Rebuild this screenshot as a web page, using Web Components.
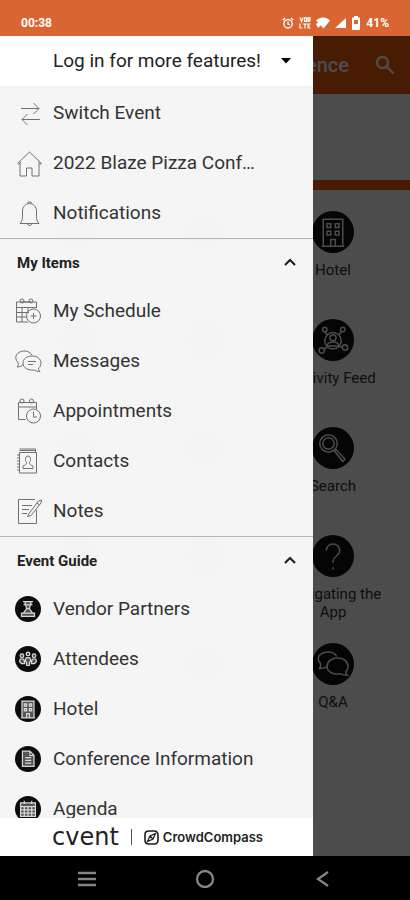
<!DOCTYPE html>
<html lang="en">
<head>
<meta charset="utf-8">
<meta name="viewport" content="width=device-width, initial-scale=1">
<title>Event menu</title>
<style>
  body {
    margin: 0;
    font-family: Roboto, "Liberation Sans", sans-serif;
    color: #333333;
  }
</style>
</head>
<body>
<event-app></event-app>

<script>
// thin line icons, 28x28 grid
const icons = {
  swap: '<path d="M6 9.500h18M18.500 4l5.500 5.500-5.500 5.500M25 20.500H7M12.500 15L7 20.500l5.500 5.500"/>',
  home: '<path d="M2.500 14.500L14.500 3l12 11.500M5 12.500V27h6.500v-8H17v8h7V12.500M4.500 15H3M24.500 15h2"/>',
  bell: '<path d="M5 24.500h19c-2-2-2.500-4-2.500-7V12c0-4-3-7.500-7-7.500S7.500 8 7.500 12v5.500c0 3-.5 5-2.500 7zM13 4.500V3h3v1.500M12.500 25c0 2 4 2 4 0"/>',
  schedule: '<path d="M13 25H1.500V5h20v6M1.500 10.500h20M7 10.500V25M13 10.500V16M1.500 15.500H14M1.500 20H12M7 5h9"/><circle cx="7" cy="4" r="2"/><circle cx="16" cy="4" r="2"/><circle cx="18.500" cy="19" r="7"/><path d="M18.500 16v6M15.500 19h6"/>',
  chat: '<path d="M8 17.500c-1 1.500-3 2.500-6 2.500 1.500-1.500 1.500-3 1-4.500C-2 10 2 4.500 8.500 4c4-.3 7 1.500 8.500 4"/><path d="M17 9c5.500 0 9 3 9 7 0 2.500-1 4-2.500 5 0 1.500.5 2.500 1.500 3.500-2.500 0-4.500-.5-6-1.500C13 23.500 8 21 8 16c0-4 3.500-7 9-7z"/><path class="detail" d="M13 14.500h8M13 17.500h5"/>',
  appointment: '<path d="M10.500 22.500H3.500V5.500h18V12M3.500 10h18M7 5.500h9"/><circle cx="7" cy="4" r="2"/><circle cx="16.500" cy="4" r="2"/><circle cx="18.500" cy="19" r="7"/><path d="M18.500 14.500V20h3.500"/>',
  contacts: '<path d="M4.500 5.500h17V26h-17zM4.500 3.500h16M4.500 2h16v3M2 8h3M2 11h3M2 14h3M2 17h3M2 20h3M2 23h3"/><path d="M13 9c-2 0-2.500 1.500-2.500 3.500 0 1.500.5 2 1 3 0 2-1 2.500-3.500 3.500v2.500h10V19c-2.500-1-3.500-1.500-3.500-3.500.5-1 1-1.500 1-3C15.500 10.500 15 9 13 9z"/>',
  notes: '<path d="M21.500 13v13.500h-18v-24h16.500M7 8.500h10M7 12.500h7M7 16.500h5"/><path d="M14 16.500L23.500 4l3-1-.5 3L16 18.500l-3.500 1zM22 6l2.500 2"/>',
  vendor: '<path d="M8.500 6h11M11 6v3.500h6V6M11.500 9.500l1 4h3l1-4M12.500 13.500L9 18.500h10l-3.500-5M7 18.500h14V22H7z"/><path d="M10 8v2M18 8v2"/>',
  attendees: '<circle cx="14" cy="8.500" r="2"/><circle cx="7.500" cy="10.500" r="2"/><circle cx="20.500" cy="10.500" r="2"/><path d="M12 12.500h4l1 4-1.500 1V21h-3v-3.500L11 16.500zM5.500 14h4l1 5H7l-2-2zM18.500 14h4l.5 3-2 2h-3.500z"/>',
  hotel: '<path d="M7.500 5.500h13v18h-13zM6.500 23.500h15M12.500 23.500V19h3v4.500"/><path d="M10 8.500h2.500V11H10zM15.500 8.500H18V11h-2.500zM10 13.500h2.500V16H10zM15.500 13.500H18V16h-2.500z"/>',
  document: '<path d="M8 5.500h8l4.500 4.500V22H8zM16 5.500V10h4.500M11 12.500h6.500M11 15.500h6.500M11 18.500h6.500"/>',
  agenda: '<path d="M6 7.500h16V22H6zM6 11.500h16M6 15h16M6 18.500h16M10 11.500V22M14 11.500V22M18 11.500V22M10 5v3.500M18 5v3.500"/>',
  feed: '<circle cx="14" cy="14.500" r="5.500"/><circle cx="14" cy="12.500" r="2"/><path d="M10 18c.5-3.500 7.500-3.500 8 0zM10 10.500L8.500 8.500M18 10.500l1.500-2M10 18.500l-2 2M18 18l2.500 1"/><circle cx="8.500" cy="7" r="1.500"/><circle cx="20.500" cy="7" r="1.500"/><circle cx="6.500" cy="21" r="1.800"/><circle cx="22" cy="19" r="1.800"/>',
  magnifier: '<circle cx="11" cy="11" r="5.800"/><circle cx="11" cy="11" r="3.800"/><path d="M15 16l1-1 6 6.500-1.500 1.500z"/>',
  question: '<path d="M9.500 10.500C9.500 4.500 18.500 4.500 18.500 10.500c0 3.500-4.500 3.500-4.500 7v1"/><path d="M14 21.500v1.500"/>',
  talk: '<path d="M10 15.500c-1 1-2.500 1.500-5 1.500 1-1.500 1-2.500.5-3.500C2.500 10 5 6.500 10 6c3-.2 5.500 1 6.500 3"/><path d="M17 10c4 0 7 2.300 7 5.500 0 1.800-.5 3-1.500 3.800 0 1 .5 1.700 1 2.200-2 0-3.500-.3-4.500-1-5 1-9-1.500-9-5C10 12.300 13 10 17 10z"/>'
};

const statusTemplate = document.createElement('template');
statusTemplate.innerHTML = `
  <style>
    :host {
      display: flex;
      flex: none;
      align-items: center;
      justify-content: space-between;
      box-sizing: border-box;
      height: 36px;
      padding: 10px 21px 0 21px;
      background-color: #d86532;
      color: #ffffff;
      font-size: 12px;
      font-weight: 700;
      line-height: 16px;
    }
    .indicators {
      display: flex;
      align-items: center;
      gap: 5px;
    }
    svg {
      display: block;
    }
  </style>
  <span>00:38</span>
  <div class="indicators">
    <svg width="12" height="12" viewBox="0 0 12 12" fill="none" stroke="#fff" stroke-width="1.300"><circle cx="6" cy="6.800" r="4.200"/><path d="M6 4.500V7l1.800 1M.8 3L3 1M11.200 3L9 1"/></svg>
    <svg width="12" height="12" viewBox="0 0 12 12" fill="none" stroke="#fff" stroke-width="1.200"><path d="M1 .5l1.500 4 1.500-4M5.500.8h2v3.500h-2zM9 5V.8h2v2H9l2 2M1 6.500V11h2.500M4 7h4M6 7v4.500M11.500 7H9v4h2.500M9 9h2"/></svg>
    <svg width="14" height="12" viewBox="0 0 14 12" fill="#fff"><path d="M0 3.500c4-4 10-4 14 0L7.500 11.500z"/><path d="M0 7l3-2 2 3-3 3z"/></svg>
    <svg width="11" height="12" viewBox="0 0 11 12" fill="#fff"><path d="M11 1v10H0z"/></svg>
    <svg width="10" height="14" viewBox="0 0 10 14" fill="#fff" fill-rule="evenodd"><path d="M3 0h4v1.500h2V14H1V1.500h2zM3 4v4h4V4z"/></svg>
    <span>41%</span>
  </div>
`;

const navTemplate = document.createElement('template');
navTemplate.innerHTML = `
  <style>
    :host {
      display: flex;
      flex: none;
      height: 44px;
      padding: 0 28px;
      background-color: #000000;
    }
    button {
      display: flex;
      flex: 1;
      align-items: center;
      justify-content: center;
      padding: 0;
      border: 0;
      background: none;
    }
    svg {
      fill: none;
      stroke: #858585;
      stroke-width: 2.3;
    }
  </style>
  <button aria-label="Recent apps"><svg width="20" height="20" viewBox="0 0 20 20"><path d="M1 5h18M1 11h18M1 17h18"/></svg></button>
  <button aria-label="Home"><svg width="20" height="20" viewBox="0 0 20 20"><circle cx="10" cy="11" r="8"/></svg></button>
  <button aria-label="Back"><svg width="20" height="20" viewBox="0 0 20 20"><path d="M15 4L5 11l10 7"/></svg></button>
`;

const tileTemplate = document.createElement('template');
tileTemplate.innerHTML = `
  <style>
    :host {
      display: block;
      padding: 0 10px;
    }
    a {
      display: flex;
      flex-direction: column;
      align-items: center;
      gap: 8px;
      color: #333333;
      font-size: 15px;
      line-height: 18px;
      text-align: center;
      text-decoration: none;
    }
    svg {
      width: 42px;
      height: 42px;
      border-radius: 50%;
      background-color: #111111;
      fill: none;
      stroke: #ffffff;
      stroke-width: 1;
    }
  </style>
  <a href="#"><svg viewBox="0 0 28 28"></svg><slot></slot></a>
`;

const itemTemplate = document.createElement('template');
itemTemplate.innerHTML = `
  <style>
    :host {
      display: block;
    }
    a {
      display: flex;
      align-items: center;
      gap: 10px;
      height: 50px;
      padding: 0 56px 0 15px;
      color: #333333;
      font-size: 19px;
      line-height: 24px;
      text-decoration: none;
    }
    svg {
      flex: none;
      width: 28px;
      height: 28px;
      fill: none;
      stroke: #707070;
      stroke-width: 1;
    }
    :host([filled]) a {
      gap: 12px;
    }
    :host([filled]) svg {
      width: 26px;
      height: 26px;
      border-radius: 50%;
      background-color: #0c0c0c;
      fill: rgba(255, 255, 255, 0.3);
      stroke: #d8d8d8;
      stroke-width: 1.3;
    }
    span {
      overflow: hidden;
      text-overflow: ellipsis;
      white-space: nowrap;
    }
  </style>
  <a href="#"><svg viewBox="0 0 28 28"></svg><span><slot></slot></span></a>
`;

const sectionTemplate = document.createElement('template');
sectionTemplate.innerHTML = `
  <style>
    :host {
      display: block;
    }
    button {
      display: flex;
      align-items: center;
      justify-content: space-between;
      box-sizing: border-box;
      width: 100%;
      height: 48px;
      padding: 0 16px 0 17px;
      border: 0;
      border-top: 1px solid #b4b4b4;
      background: none;
      color: #222222;
      font: 700 15px/20px Roboto, "Liberation Sans", sans-serif;
    }
    svg {
      fill: none;
      stroke: #1c1c1c;
      stroke-width: 2;
    }
    :host([collapsed]) .items {
      display: none;
    }
    :host([collapsed]) svg {
      transform: rotate(180deg);
    }
  </style>
  <button aria-expanded="true">
    <span class="heading"></span>
    <svg width="14" height="14" viewBox="0 0 14 14"><path d="M2 9l5-5 5 5"/></svg>
  </button>
  <div class="items"><slot></slot></div>
`;

const drawerTemplate = document.createElement('template');
drawerTemplate.innerHTML = `
  <style>
    :host {
      display: flex;
      flex-direction: column;
      box-sizing: border-box;
    }
    .account {
      display: flex;
      flex: none;
      align-items: center;
      justify-content: space-between;
      height: 50px;
      padding: 0 22px 0 53px;
      border: 0;
      background-color: #ffffff;
      color: #222222;
      font: 400 19px/24px Roboto, "Liberation Sans", sans-serif;
    }
    .list {
      flex: 1;
      min-height: 0;
      padding-top: 2px;
      overflow: hidden auto;
      scrollbar-width: none;
      background-color: rgba(249, 249, 249, 0.98);
    }
    footer {
      display: flex;
      flex: none;
      align-items: center;
      height: 38px;
      padding-left: 52px;
      background-color: #ffffff;
      color: #222222;
    }
    .cvent {
      font: 400 24px/24px "DejaVu Sans", sans-serif;
    }
    .rule {
      width: 1px;
      height: 16px;
      margin: 0 12px;
      background-color: #555555;
    }
    .crowd {
      margin-left: 4px;
      font: 600 13px/16px Inter, sans-serif;
    }
  </style>
  <button class="account">
    <span>Log in for more features!</span>
    <svg width="10" height="6" viewBox="0 0 10 6"><path d="M0 0h10L5 5.500z"/></svg>
  </button>
  <div class="list"><slot></slot></div>
  <footer>
    <span class="cvent">cvent</span>
    <span class="rule"></span>
    <svg width="15" height="15" viewBox="0 0 15 15" fill="none" stroke="#1c1c1c" stroke-width="1.600"><path d="M5 1h5c3 0 4 1 4 4v5c0 3-1 4-4 4H5c-3 0-4-1-4-4V5c0-3 1-4 4-4z"/><path stroke-width="1.200" d="M11.500 3.500L9 9l-5.500 2.500L6 6zM6 6l3 3"/></svg>
    <span class="crowd">CrowdCompass</span>
  </footer>
`;

const homeTemplate = document.createElement('template');
homeTemplate.innerHTML = `
  <style>
    :host {
      display: block;
      background-color: #ffffff;
    }
    header {
      display: flex;
      align-items: center;
      justify-content: flex-end;
      gap: 25px;
      box-sizing: border-box;
      height: 58px;
      padding-right: 14px;
      background-color: #f05a0a;
      color: #ffffff;
    }
    h1 {
      margin: 0;
      font-size: 20px;
      font-weight: 500;
      line-height: 26px;
      white-space: nowrap;
    }
    button {
      padding: 0;
      border: 0;
      background: none;
    }
    header svg {
      display: block;
      fill: none;
      stroke: #ffffff;
      stroke-width: 2.4;
    }
    .banner {
      height: 86px;
      border-bottom: 10px solid #f05a0a;
    }
    .tiles {
      display: grid;
      grid-template-columns: repeat(3, 1fr);
      grid-auto-rows: 108px;
      padding: 21px 13px 0;
    }
    home-tile {
      grid-column: 3;
    }
    .spot {
      justify-self: center;
      width: 42px;
      height: 42px;
      border-radius: 50%;
      background-color: #111111;
    }
  </style>
  <header>
    <h1>Conference</h1>
    <button aria-label="Search"><svg width="22" height="22" viewBox="0 0 22 22"><circle cx="8.500" cy="8.500" r="5.500"/><path d="M12.500 12.500l7 7"/></svg></button>
  </header>
  <div class="banner"></div>
  <div class="tiles">
    <div class="spot"></div><div class="spot"></div>
    <home-tile icon="hotel">Hotel</home-tile>
    <div class="spot"></div><div class="spot"></div>
    <home-tile icon="feed">Activity Feed</home-tile>
    <div class="spot"></div><div class="spot"></div>
    <home-tile icon="magnifier">Search</home-tile>
    <div class="spot"></div><div class="spot"></div>
    <home-tile icon="question">Navigating the App</home-tile>
    <div class="spot"></div><div class="spot"></div>
    <home-tile icon="talk">Q&amp;A</home-tile>
  </div>
`;

const appTemplate = document.createElement('template');
appTemplate.innerHTML = `
  <style>
    :host {
      display: flex;
      flex-direction: column;
      height: 100vh;
    }
    main {
      position: relative;
      flex: 1;
      min-height: 0;
      overflow: hidden;
    }
    home-screen {
      height: 100%;
    }
    .scrim {
      position: absolute;
      inset: 0;
      background-color: rgba(0, 0, 0, 0.7);
    }
    :host(:not([open])) .scrim,
    :host(:not([open])) event-drawer {
      display: none;
    }
    event-drawer {
      position: absolute;
      top: 0;
      bottom: 0;
      left: 0;
      width: calc(100% - 97px);
      max-width: 320px;
    }
  </style>
  <status-bar></status-bar>
  <main>
    <home-screen></home-screen>
    <div class="scrim"></div>
    <event-drawer>
      <drawer-item icon="swap">Switch Event</drawer-item>
      <drawer-item icon="home">2022 Blaze Pizza Conference</drawer-item>
      <drawer-item icon="bell">Notifications</drawer-item>
      <drawer-section heading="My Items">
        <drawer-item icon="schedule">My Schedule</drawer-item>
        <drawer-item icon="chat">Messages</drawer-item>
        <drawer-item icon="appointment">Appointments</drawer-item>
        <drawer-item icon="contacts">Contacts</drawer-item>
        <drawer-item icon="notes">Notes</drawer-item>
      </drawer-section>
      <drawer-section heading="Event Guide">
        <drawer-item filled icon="vendor">Vendor Partners</drawer-item>
        <drawer-item filled icon="attendees">Attendees</drawer-item>
        <drawer-item filled icon="hotel">Hotel</drawer-item>
        <drawer-item filled icon="document">Conference Information</drawer-item>
        <drawer-item filled icon="agenda">Agenda</drawer-item>
      </drawer-section>
    </event-drawer>
  </main>
  <system-nav></system-nav>
`;

class BaseElement extends HTMLElement {
  constructor(template) {
    super();

    this.attachShadow({ mode: 'open' });

    this.shadowRoot.appendChild(template.content.cloneNode(true));
  }
}

class StatusBar extends BaseElement {
  constructor() {
    super(statusTemplate);
  }
}

class SystemNav extends BaseElement {
  constructor() {
    super(navTemplate);
  }
}

class HomeTile extends BaseElement {
  constructor() {
    super(tileTemplate);
  }

  connectedCallback() {
    this.shadowRoot.querySelector('svg').innerHTML = icons[this.getAttribute('icon')] || '';
  }
}

class DrawerItem extends BaseElement {
  constructor() {
    super(itemTemplate);
  }

  connectedCallback() {
    this.shadowRoot.querySelector('svg').innerHTML = icons[this.getAttribute('icon')] || '';
  }
}

class DrawerSection extends BaseElement {
  constructor() {
    super(sectionTemplate);

    this.button = this.shadowRoot.querySelector('button');
    this.button.addEventListener('click', this.toggle.bind(this));
  }

  connectedCallback() {
    this.shadowRoot.querySelector('.heading').textContent = this.getAttribute('heading');
  }

  toggle() {
    const collapsed = this.toggleAttribute('collapsed');

    this.button.setAttribute('aria-expanded', String(!collapsed));
  }
}

class EventDrawer extends BaseElement {
  constructor() {
    super(drawerTemplate);
  }
}

class HomeScreen extends BaseElement {
  constructor() {
    super(homeTemplate);
  }
}

class EventApp extends BaseElement {
  constructor() {
    super(appTemplate);

    this.shadowRoot.querySelector('.scrim').addEventListener('click', () => this.close());
  }

  connectedCallback() {
    this.setAttribute('open', '');
  }

  close() {
    this.removeAttribute('open');
  }
}

customElements.define('status-bar', StatusBar);
customElements.define('system-nav', SystemNav);
customElements.define('home-tile', HomeTile);
customElements.define('drawer-item', DrawerItem);
customElements.define('drawer-section', DrawerSection);
customElements.define('event-drawer', EventDrawer);
customElements.define('home-screen', HomeScreen);
customElements.define('event-app', EventApp);
</script>
</body>
</html>
